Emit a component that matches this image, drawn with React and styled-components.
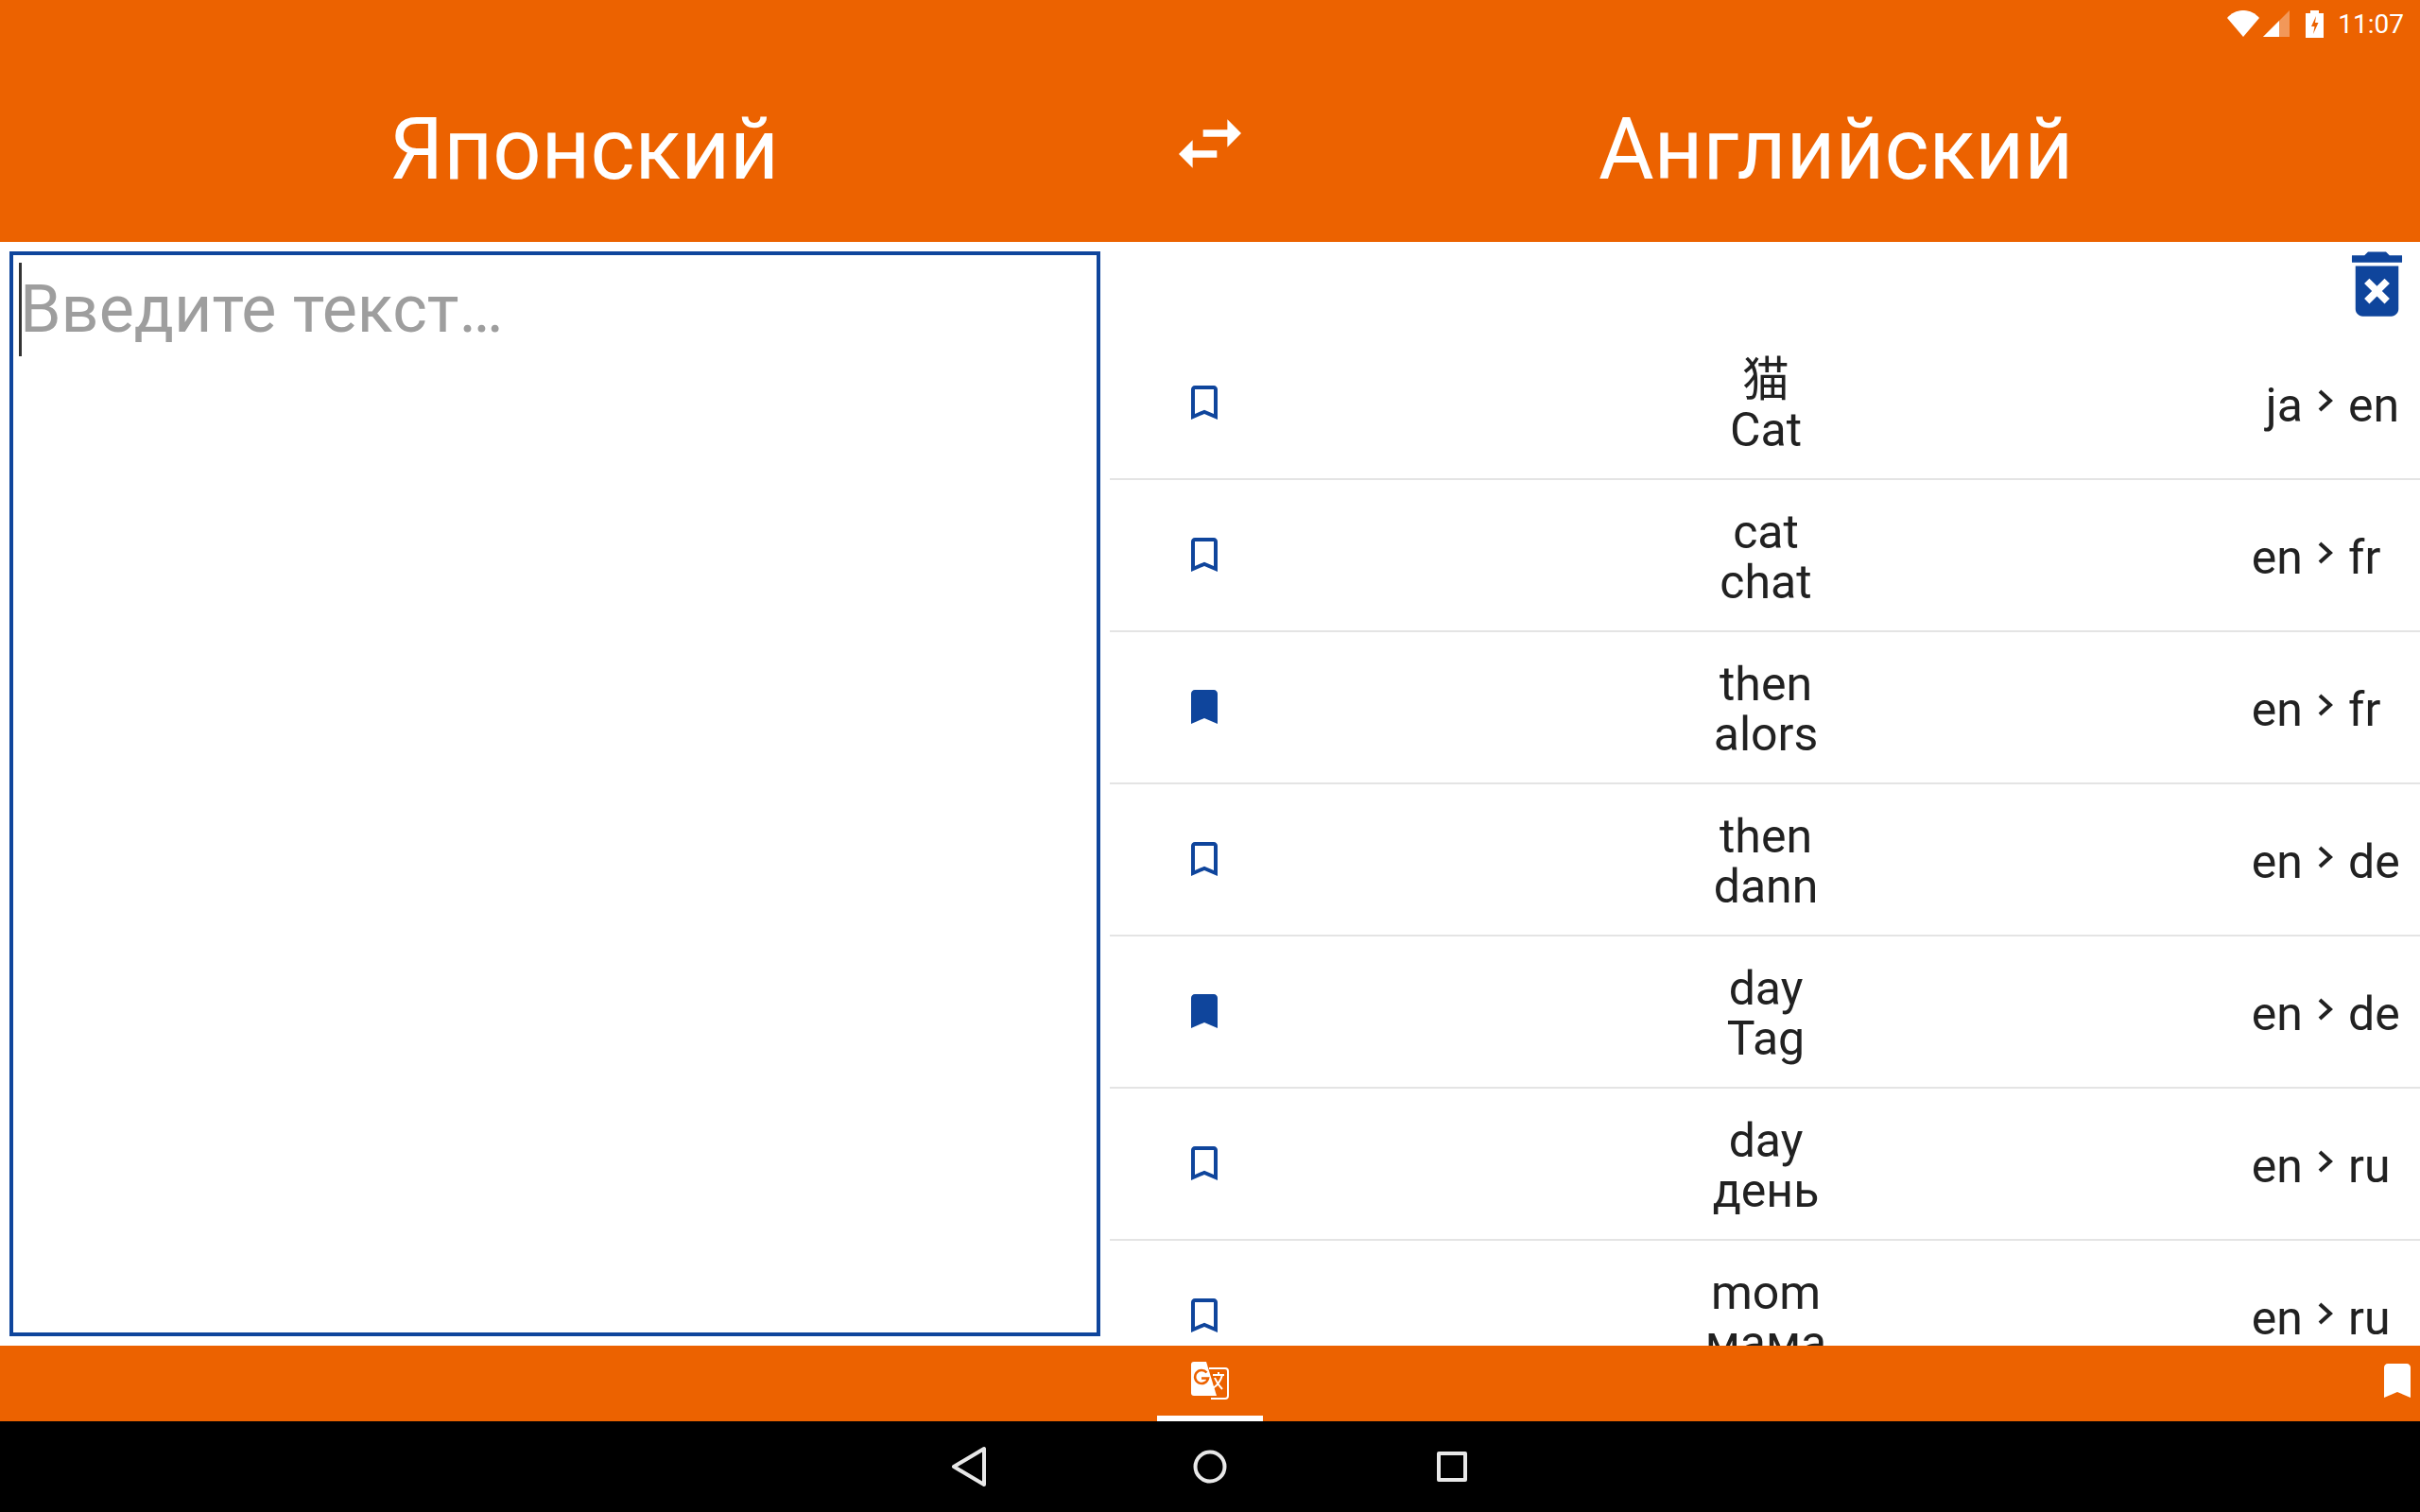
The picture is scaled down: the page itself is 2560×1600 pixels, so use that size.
import React from 'react';
import styled, { createGlobalStyle } from 'styled-components';

const ORANGE = '#ec6200';
const BLUE = '#0f459c';

const GlobalStyle = createGlobalStyle`
  html, body {
    margin: 0;
    padding: 0;
    background: #fff;
  }
  * {
    box-sizing: border-box;
  }
`;

const Screen = styled.div`
  width: 2560px;
  height: 1600px;
  display: flex;
  flex-direction: column;
  overflow: hidden;
  font-family: Roboto, "Noto Sans CJK JP", sans-serif;
  color: #212121;
`;

const Header = styled.header`
  height: 256px;
  flex-shrink: 0;
  background: ${ORANGE};
  color: #fff;
  display: flex;
  flex-direction: column;
`;

const StatusBar = styled.div`
  height: 48px;
  display: flex;
  align-items: center;
  justify-content: flex-end;
  padding: 2px 17px 0 0;
`;

const StatusIcon = styled.svg`
  display: block;
  margin-right: ${(props) => props.$gap}px;
`;

const Clock = styled.span`
  font-size: 28px;
  line-height: 48px;
  margin-left: 15px;
  padding-top: 2px;
`;

const Toolbar = styled.div`
  flex: 1;
  display: grid;
  grid-template-columns: 1fr 88px 1fr;
  align-items: center;
`;

const Title = styled.div`
  font-size: 90px;
  font-weight: 400;
  text-align: center;
  line-height: 100px;
  padding-top: 14px;
`;

const SwapIcon = styled.svg`
  display: block;
  width: 88px;
  height: 88px;
  fill: #fff;
`;

const Body = styled.main`
  flex: 1;
  min-height: 0;
  display: flex;
`;

const EditorPane = styled.section`
  width: 1174px;
  flex-shrink: 0;
  padding: 10px;
`;

const Editor = styled.div`
  height: 100%;
  border: 4px solid ${BLUE};
  padding: 8px 6px;
  display: flex;
  align-items: flex-start;
`;

const Caret = styled.span`
  width: 3px;
  height: 99px;
  flex-shrink: 0;
  background: #333;
`;

const Placeholder = styled.span`
  font-size: 70px;
  line-height: 99px;
  margin-left: -2px;
  color: #9e9e9e;
`;

const HistoryPane = styled.section`
  flex: 1;
  min-width: 0;
  overflow: hidden;
`;

const HistoryTools = styled.div`
  height: 91px;
  display: flex;
  justify-content: flex-end;
`;

const TrashIcon = styled.svg`
  display: block;
  width: 91px;
  height: 91px;
  margin-top: -1px;
  fill: ${BLUE};
`;

const Row = styled.article`
  height: 161px;
  display: grid;
  grid-template-columns: 200px 988px 198px;
  align-items: center;
  border-bottom: 2px solid #e4e4e4;
`;

const BookmarkCell = styled.div`
  padding-left: 76px;
`;

const BookmarkIcon = styled.svg`
  display: block;
  width: 48px;
  height: 48px;
  margin-top: -2px;
  fill: ${(props) => props.$color};
`;

const Phrase = styled.div`
  text-align: center;
  font-size: 50px;
  line-height: 53px;
  padding-top: 5px;
`;

const Langs = styled.div`
  display: grid;
  grid-template-columns: 74px 48px 1fr;
  align-items: center;
  font-size: 50px;
  line-height: 54px;
  padding-top: 4px;
`;

const Source = styled.span`
  text-align: right;
`;

const Chevron = styled.svg`
  display: block;
  justify-self: center;
  width: 18px;
  height: 28px;
  margin-top: -8px;
  fill: none;
  stroke: #212121;
  stroke-width: 4;
`;

const TabBar = styled.nav`
  height: 80px;
  flex-shrink: 0;
  background: ${ORANGE};
  display: grid;
  grid-template-columns: 1224px 112px 1176px 48px;
`;

const Tab = styled.div`
  grid-column: ${(props) => props.$column};
  display: flex;
  align-items: center;
  justify-content: center;
  border-bottom: 6px solid ${(props) => (props.$active ? '#fff' : 'transparent')};
`;

const TabSvg = styled.svg`
  display: block;
  width: ${(props) => props.$size}px;
  height: ${(props) => props.$size}px;
  fill: #fff;
`;

const NavBar = styled.div`
  height: 96px;
  flex-shrink: 0;
  background: #000;
  display: flex;
  align-items: center;
  justify-content: center;
  gap: 176px;
`;

const NavIcon = styled.svg`
  display: block;
  width: 80px;
  height: 80px;
  fill: none;
  stroke: #e8e8e8;
  stroke-width: 4;
  stroke-linejoin: round;
`;

const rows = [
  { from: '猫', to: 'Cat', src: 'ja', dst: 'en' },
  { from: 'cat', to: 'chat', src: 'en', dst: 'fr' },
  { from: 'then', to: 'alors', src: 'en', dst: 'fr', saved: true },
  { from: 'then', to: 'dann', src: 'en', dst: 'de' },
  { from: 'day', to: 'Tag', src: 'en', dst: 'de', saved: true },
  { from: 'day', to: 'день', src: 'en', dst: 'ru' },
  { from: 'mom', to: 'мама', src: 'en', dst: 'ru' },
];

const OUTLINE = 'M17 3H7c-1.1 0-2 .9-2 2v16l7-3 7 3V5c0-1.1-.9-2-2-2zm0 15l-5-2.18L7 18V5h10v13z';
const FILLED = 'M17 3H7c-1.1 0-2 .9-2 2v16l7-3 7 3V5c0-1.1-.9-2-2-2z';

const HistoryRow = ({ item }) => (
  <Row>
    <BookmarkCell>
      <BookmarkIcon $color={BLUE} viewBox="0 0 24 24">
        <path d={item.saved ? FILLED : OUTLINE} />
      </BookmarkIcon>
    </BookmarkCell>
    <Phrase>
      <div>{item.from}</div>
      <div>{item.to}</div>
    </Phrase>
    <Langs>
      <Source>{item.src}</Source>
      <Chevron viewBox="0 0 18 28">
        <polyline points="3,3 14,13 3,23" />
      </Chevron>
      <span>{item.dst}</span>
    </Langs>
  </Row>
);

const TranslateIcon = () => (
  <svg width="40" height="40" viewBox="0 0 40 40" style={{ display: 'block' }}>
    <path d="M19 7h17a3 3 0 0 1 3 3v26a3 3 0 0 1-3 3H21" fill="none" stroke="#fff" strokeWidth="2" />
    <path d="M3 0h13l11 36H3a3 3 0 0 1-3-3V3a3 3 0 0 1 3-3z" fill="#fff" />
    <path d="M16.500 11.500a7 7 0 1 0 1.500 6h-7" fill="none" stroke={ORANGE} strokeWidth="2.6" />
    <path d="M23 14h12M29 11v3M33 14c-2 7-5 11-10 14M25 17c2 5 5 9 8 12" fill="none" stroke="#fff" strokeWidth="2" />
  </svg>
);

export default function App() {
  return (
    <Screen>
      <GlobalStyle />
      <Header>
        <StatusBar>
          <StatusIcon $gap={4} width="34" height="28" viewBox="0 0 34 28">
            <path d="M0 8C9-2.700 25-2.700 34 8L17 28z" fill="#fff" />
          </StatusIcon>
          <StatusIcon $gap={17} width="28" height="28" viewBox="0 0 28 28">
            <path d="M28 0v28H0z" fill="#fff" fillOpacity=".35" />
            <path d="M17 11v17H0z" fill="#fff" />
          </StatusIcon>
          <StatusIcon $gap={0} width="19" height="29" viewBox="0 0 19 29">
            <path d="M5 3V0h9v3h5v26H0V3z" fill="#fff" />
            <path d="M11 6l-5 11h3.500L8 25l5.500-12H10z" fill={ORANGE} />
          </StatusIcon>
          <Clock>11:07</Clock>
        </StatusBar>
        <Toolbar>
          <Title>Японский</Title>
          <SwapIcon viewBox="0 0 24 24">
            <path d="M6.990 11L3 15l3.990 4v-3H14v-2H6.990v-3zM21 9l-3.990-4v3H10v2h7.010v3L21 9z" />
          </SwapIcon>
          <Title>Английский</Title>
        </Toolbar>
      </Header>
      <Body>
        <EditorPane>
          <Editor>
            <Caret />
            <Placeholder>Введите текст…</Placeholder>
          </Editor>
        </EditorPane>
        <HistoryPane>
          <HistoryTools>
            <TrashIcon viewBox="0 0 24 24">
              <path d="M6 19c0 1.100.9 2 2 2h8c1.100 0 2-.9 2-2V7H6v12zm2.460-7.120l1.410-1.410L12 12.590l2.120-2.120 1.410 1.410L13.410 14l2.120 2.120-1.410 1.410L12 15.410l-2.120 2.120-1.410-1.410L10.590 14l-2.130-2.120zM15.500 4l-1-1h-5l-1 1H5v2h14V4z" />
            </TrashIcon>
          </HistoryTools>
          {rows.map((item) => (
            <HistoryRow key={item.from + item.to} item={item} />
          ))}
        </HistoryPane>
      </Body>
      <TabBar>
        <Tab $column={2} $active>
          <TranslateIcon />
        </Tab>
        <Tab $column={4}>
          <TabSvg $size={48} viewBox="0 0 24 24">
            <path d={FILLED} />
          </TabSvg>
        </Tab>
      </TabBar>
      <NavBar>
        <NavIcon viewBox="0 0 80 80">
          <path d="M57 21v38L25 40z" />
        </NavIcon>
        <NavIcon viewBox="0 0 80 80">
          <circle cx="40" cy="40" r="15.500" />
        </NavIcon>
        <NavIcon viewBox="0 0 80 80">
          <rect x="26" y="26" width="28" height="28" />
        </NavIcon>
      </NavBar>
    </Screen>
  );
}
